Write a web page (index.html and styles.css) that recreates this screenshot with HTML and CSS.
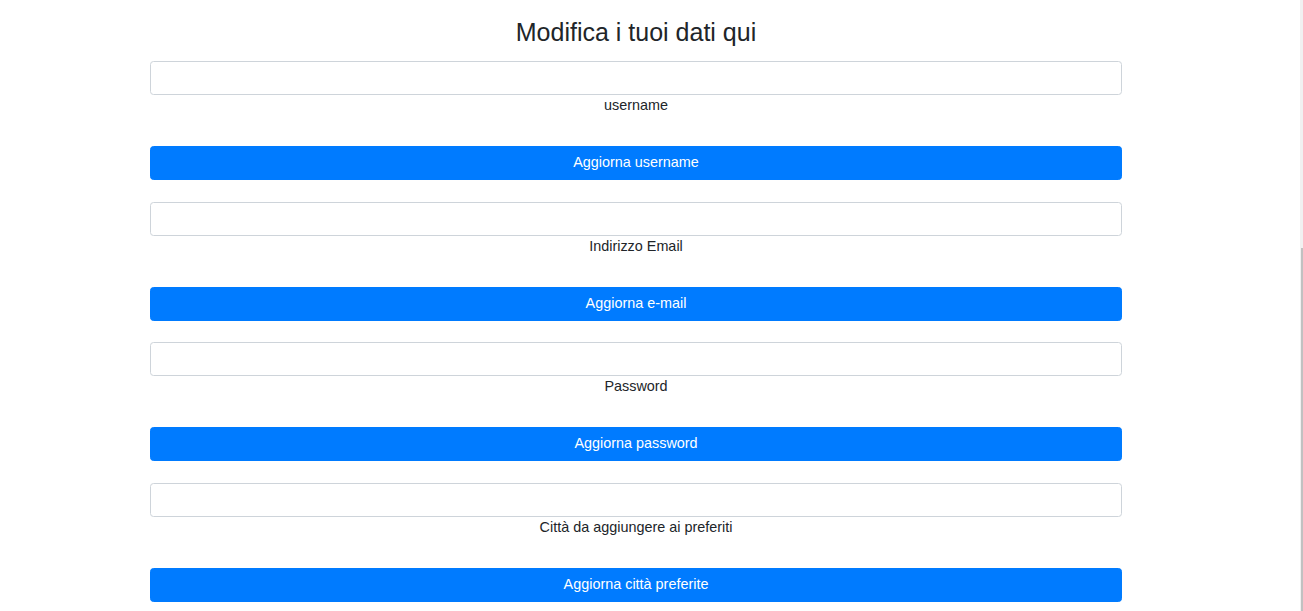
FILE: index.html
```html
<!DOCTYPE html>
<html lang="it">
<head>
<meta charset="utf-8">
<title>Modifica i tuoi dati</title>
<link rel="stylesheet" href="styles.css">
</head>
<body>
<div class="page">
  <h3 class="title">Modifica i tuoi dati qui</h3>
  <form class="group">
    <input class="field" type="text" id="username">
    <label class="caption" for="username">username</label>
    <button class="btn" type="button">Aggiorna username</button>
  </form>
  <form class="group">
    <input class="field" type="email" id="email">
    <label class="caption" for="email">Indirizzo Email</label>
    <button class="btn" type="button">Aggiorna e-mail</button>
  </form>
  <form class="group">
    <input class="field" type="password" id="password">
    <label class="caption" for="password">Password</label>
    <button class="btn" type="button">Aggiorna password</button>
  </form>
  <form class="group">
    <input class="field" type="text" id="citta">
    <label class="caption" for="citta">Città da aggiungere ai preferiti</label>
    <button class="btn" type="button">Aggiorna città preferite</button>
  </form>
</div>
<div class="scroll-track"><div class="scroll-thumb"></div></div>
</body>
</html>
```

FILE: styles.css
```css
html, body {
  margin: 0;
  padding: 0;
  background: #fff;
  overflow: hidden;
}
body {
  font-family: "Liberation Sans", Arial, sans-serif;
  font-size: 14.4px;
  line-height: 1.5;
  color: #212529;
}
.page {
  width: 972px;
  margin-left: 150px;
  padding-top: 17px;
  display: flex;
  flex-direction: column;
}
.title {
  margin: 0 0 14px 0;
  font-size: 25px;
  font-weight: 400;
  line-height: 1.2;
  text-align: center;
}
.group {
  display: flex;
  flex-direction: column;
  margin: 0 0 21.5px 0;
}
.field {
  box-sizing: border-box;
  height: 34px;
  width: 100%;
  margin: 0;
  padding: 5px 10px;
  border: 1px solid #ced4da;
  border-radius: 3.5px;
  background: #fff;
  font-family: inherit;
  font-size: 14.4px;
  color: #495057;
  outline: none;
}
.caption {
  display: block;
  text-align: center;
  line-height: 21px;
  height: 21px;
  margin-bottom: 30px;
}
.btn {
  box-sizing: border-box;
  height: 34px;
  width: 100%;
  margin: 0;
  padding: 4.5px 10px 5.5px;
  border: 1px solid #007bff;
  border-radius: 3.5px;
  background: #007bff;
  color: #fff;
  font-family: inherit;
  font-size: 14.4px;
  line-height: 21px;
  text-align: center;
  cursor: pointer;
}
.scroll-track {
  position: fixed;
  top: 0;
  right: 0;
  width: 3px;
  height: 100%;
  background: #f1f1f1;
}
.scroll-thumb {
  position: absolute;
  top: 248px;
  left: 1px;
  width: 2px;
  bottom: 0;
  background: #c1c1c1;
}
```
